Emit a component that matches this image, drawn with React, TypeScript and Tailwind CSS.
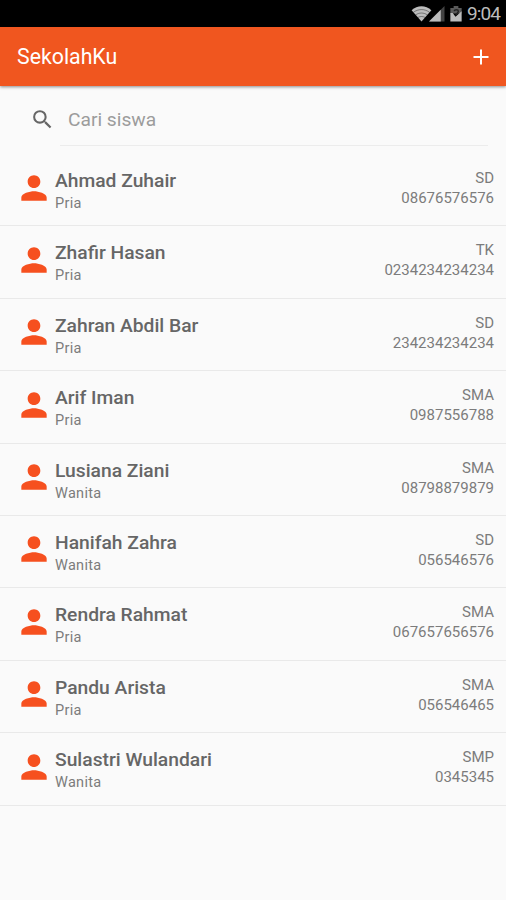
const students = [
  { name: "Ahmad Zuhair", gender: "Pria", level: "SD", phone: "08676576576" },
  { name: "Zhafir Hasan", gender: "Pria", level: "TK", phone: "0234234234234" },
  { name: "Zahran Abdil Bar", gender: "Pria", level: "SD", phone: "234234234234" },
  { name: "Arif Iman", gender: "Pria", level: "SMA", phone: "0987556788" },
  { name: "Lusiana Ziani", gender: "Wanita", level: "SMA", phone: "08798879879" },
  { name: "Hanifah Zahra", gender: "Wanita", level: "SD", phone: "056546576" },
  { name: "Rendra Rahmat", gender: "Pria", level: "SMA", phone: "067657656576" },
  { name: "Pandu Arista", gender: "Pria", level: "SMA", phone: "056546465" },
  { name: "Sulastri Wulandari", gender: "Wanita", level: "SMP", phone: "0345345" },
];

function StatusBar() {
  return (
    <div className="flex h-[27px] items-center justify-end bg-black pr-[6px] text-[#bcbcbc]">
      <svg className="h-[16px] w-[21px]" viewBox="0 0 21 17" fill="none">
        <path d="M0 4.5C6-1 15-1 21 4.5L10.5 16.5z" fill="currentColor" />
        <path
          d="M1.8 6.8C7 2.8 14 2.8 19.2 6.8M4.2 9.5C8 6.8 13 6.8 16.8 9.5M6.6 12.2C9 10.8 12 10.8 14.4 12.2"
          stroke="#000"
          strokeOpacity=".5"
          strokeWidth=".8"
        />
      </svg>
      <svg className="-ml-[3px] h-[16px] w-[16px]" viewBox="0 0 17 17">
        <path d="M0 16.5L16.5 0v16.5z" fill="#444" />
        <path d="M0 16.5L12.5 4v12.5z" fill="currentColor" />
      </svg>
      <svg className="ml-[5px] h-[16px] w-[12px]" viewBox="0 0 12 17">
        <path d="M3.5 0h5v2H12v6H0V2h3.5z" fill="#5a5a5a" />
        <path d="M0 7.5l2.5 0 3 4L12 5.5v11H0z" fill="currentColor" />
        <path d="M4 5.5c.5-2 4.5-2 4.5 0S6 7.5 6 10" fill="none" stroke="#222" strokeWidth="1.5" />
      </svg>
      <span className="ml-[5px] text-[19px] leading-none tracking-[-0.9px]">9:04</span>
    </div>
  );
}

function PersonIcon() {
  return (
    <svg className="size-[38px] shrink-0 fill-[#f6501f]" viewBox="0 0 24 24">
      <path d="M12 12c2.21 0 4-1.79 4-4s-1.79-4-4-4-4 1.79-4 4 1.79 4 4 4zm0 2c-2.67 0-8 1.34-8 4v2h16v-2c0-2.66-5.33-4-8-4z" />
    </svg>
  );
}

export default function App() {
  return (
    <div className="h-[900px] w-[506px] overflow-hidden bg-[#fafafa] font-['Roboto',sans-serif]">
      <StatusBar />

      {/* APP BAR */}
      <header className="relative flex h-[59px] items-center justify-between bg-[#f0561f] pr-[17px] pl-[17px] text-white shadow-[0_1px_3px_rgba(0,0,0,0.45)]">
        <h1 className="pt-px text-[21.3px] leading-none font-normal">SekolahKu</h1>
        <svg className="size-[16px]" viewBox="0 0 16 16">
          <path d="M8 .5v15M.5 8h15" stroke="currentColor" strokeWidth="2" />
        </svg>
      </header>

      {/* SEARCH */}
      <div className="flex h-[68px] pr-[18px] pl-[30px]">
        <svg className="mt-[21px] size-[25px] shrink-0 fill-[#666]" viewBox="0 0 24 24">
          <path d="M15.5 14h-.79l-.28-.27A6.471 6.471 0 0 0 16 9.5 6.5 6.5 0 1 0 9.5 16c1.61 0 3.09-.59 4.23-1.57l.27.28v.79l5 4.99L20.49 19l-4.99-5zm-6 0C7.01 14 5 11.99 5 9.5S7.01 5 9.5 5 14 7.01 14 9.5 11.99 14 9.5 14z" />
        </svg>
        <div className="ml-[5px] h-[60px] flex-1 border-b border-[#ececec] pt-[22px] pl-2">
          <input
            placeholder="Cari siswa"
            className="block h-6 w-full text-[19.2px] leading-6 outline-none placeholder:text-[#9c9c9c]"
          />
        </div>
      </div>

      {/* STUDENTS */}
      <ul>
        {students.map((student) => (
          <li
            key={student.name}
            className="flex h-[72.4px] border-b border-[#e9e9e9] pr-3 pl-[15px] text-[#7c7c7c]"
          >
            <div className="pt-[14.5px]">
              <PersonIcon />
            </div>
            <div className="ml-[2px] flex-1 pt-[15px]">
              <p className="text-[19.25px] leading-6 font-medium text-[#666]">{student.name}</p>
              <p className="text-[14.5px] leading-[22px] tracking-[0.3px]">{student.gender}</p>
            </div>
            <div className="pt-[14px] text-right text-[15px] leading-5">
              <p>{student.level}</p>
              <p>{student.phone}</p>
            </div>
          </li>
        ))}
      </ul>
    </div>
  );
}
